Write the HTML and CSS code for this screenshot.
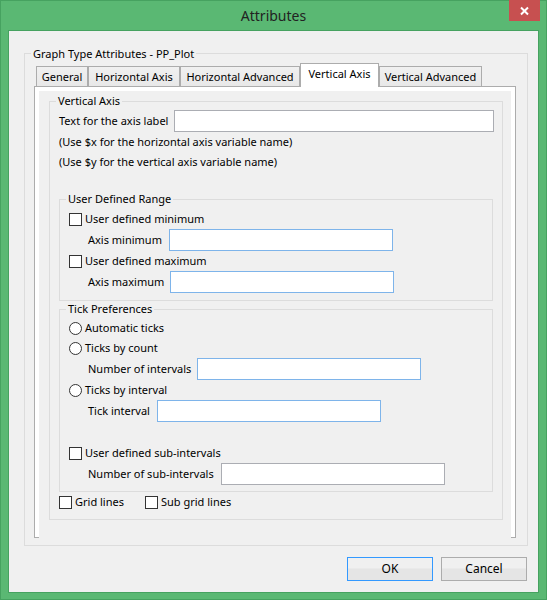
FILE: index.html
```html
<!DOCTYPE html>
<html>
<head>
<meta charset="utf-8">
<title>Attributes</title>
<link rel="stylesheet" href="styles.css">
</head>
<body>
<div class="window">
  <div class="titlebar">
    <span class="spacer"></span>
    <span class="title">Attributes</span>
    <button class="close" type="button" aria-label="Close">
      <svg width="31" height="21" viewBox="0 0 31 21"><path d="M12 7.5 L19 14.5 M19 7.5 L12 14.5" stroke="#fff" stroke-width="2" fill="none"/></svg>
    </button>
  </div>
  <div class="client">
    <div class="group outer">
      <div class="legend">Graph Type Attributes - PP_Plot</div>
      <div class="tabs">
        <div class="tab t-general">General</div>
        <div class="tab t-haxis">Horizontal Axis</div>
        <div class="tab t-hadv">Horizontal Advanced</div>
        <div class="tab active t-vaxis">Vertical Axis</div>
        <div class="tab t-vadv">Vertical Advanced</div>
      </div>
      <div class="panel">
        <div class="page">
          <div class="group axis">
            <div class="legend">Vertical Axis</div>
            <div class="field top">
              <label class="lbl lbl-label">Text for the axis label</label>
              <input class="text wide" type="text">
            </div>
            <div class="note">(Use $x for the horizontal axis variable name)</div>
            <div class="note">(Use $y for the vertical axis variable name)</div>

            <div class="group sub range">
              <div class="legend">User Defined Range</div>
              <label class="check first-range"><input type="checkbox"><span>User defined minimum</span></label>
              <div class="field indent">
                <span class="lbl lbl-min">Axis minimum</span>
                <input class="text hover" type="text">
              </div>
              <label class="check"><input type="checkbox"><span>User defined maximum</span></label>
              <div class="field indent">
                <span class="lbl lbl-max">Axis maximum</span>
                <input class="text hover" type="text">
              </div>
            </div>

            <div class="group sub ticks">
              <div class="legend">Tick Preferences</div>
              <label class="check first-tick"><input type="radio" name="tick"><span>Automatic ticks</span></label>
              <label class="check"><input type="radio" name="tick"><span>Ticks by count</span></label>
              <div class="field indent">
                <span class="lbl lbl-count">Number of intervals</span>
                <input class="text hover" type="text">
              </div>
              <label class="check"><input type="radio" name="tick"><span>Ticks by interval</span></label>
              <div class="field indent">
                <span class="lbl lbl-tick">Tick interval</span>
                <input class="text hover" type="text">
              </div>
              <label class="check spaced"><input type="checkbox"><span>User defined sub-intervals</span></label>
              <div class="field indent">
                <span class="lbl lbl-sub">Number of sub-intervals</span>
                <input class="text" type="text">
              </div>
            </div>

            <div class="grid-row">
              <label class="check plain grid-item"><input type="checkbox"><span>Grid lines</span></label>
              <label class="check plain"><input type="checkbox"><span>Sub grid lines</span></label>
            </div>
          </div>
        </div>
      </div>
    </div>
    <div class="buttons">
      <button class="btn default" type="button">OK</button>
      <button class="btn" type="button">Cancel</button>
    </div>
  </div>
</div>
</body>
</html>
```
FILE: styles.css
```css
* { box-sizing: border-box; }

body {
  margin: 0;
  font-family: "Noto Sans", "Open Sans", sans-serif;
  font-size: 11px;
  line-height: 16px;
  color: #000;
  background: #ffffff;
}

.window {
  width: 547px;
  height: 600px;
  background: #5ab873;
  border: 1px solid #46a260;
  display: flex;
  flex-direction: column;
}

.titlebar {
  height: 29px;
  display: grid;
  grid-template-columns: 1fr auto 1fr;
  align-items: start;
}

.title {
  font-size: 14px;
  line-height: 30px;
  color: #222;
}

.close {
  justify-self: end;
  width: 31px;
  height: 21px;
  margin: -1px 6px 0 0;
  padding: 0;
  border: 0;
  background: #c75050;
  display: flex;
}

.client {
  flex: 1;
  margin: 0 7px 7px;
  border: 1px solid #46a260;
  background: #f0f0f0;
  display: flex;
  flex-direction: column;
}

.group {
  border: 1px solid #dcdcdc;
}

.legend {
  width: fit-content;
  margin: -9px 0 0 6px;
  padding: 0 2px;
  line-height: 16px;
  background: #f0f0f0;
  white-space: nowrap;
}

.outer {
  margin: 22px 10px 0 15px;
}

.outer > .legend {
  padding-top: 1px;
  margin-bottom: -1px;
}

.tabs {
  display: flex;
  align-items: flex-end;
  height: 24px;
  margin: 2px 0 -1px 11px;
}

.tab {
  height: 20px;
  margin-bottom: 1px;
  border: 1px solid #acacac;
  border-bottom: 0;
  background: linear-gradient(#f0f0f0, #e8e8e8);
  display: flex;
  align-items: center;
  justify-content: center;
  white-space: nowrap;
}

.tab.active {
  height: 24px;
  margin-bottom: 0;
  padding-bottom: 3px;
  background: #ffffff;
  position: relative;
  z-index: 1;
}

.t-general { width: 52px; }
.t-haxis { width: 92px; }
.t-hadv { width: 120px; }
.t-vaxis { width: 79px; }
.t-vadv { width: 103px; }

.panel {
  margin: 0 11px 7px 9px;
  border: 1px solid #acacac;
  background: #ffffff;
  padding: 4px 4px 0;
}

.page {
  background: #f0f0f0;
  margin-bottom: -1px;
  padding: 10px 8px 18px 10px;
}

.field {
  display: flex;
  align-items: center;
  height: 22px;
}

.field.top {
  margin: 1px 8px 0 9px;
}

.field.indent {
  padding-left: 28px;
}

.lbl {
  white-space: nowrap;
  flex: none;
}

.lbl-label { width: 115px; }
.lbl-min { width: 81px; }
.lbl-max { width: 82px; }
.lbl-count { width: 109px; }
.lbl-tick { width: 69px; }
.lbl-sub { width: 133px; }

.text {
  width: 224px;
  height: 22px;
  margin: 0;
  padding: 0 3px;
  border: 1px solid #abadb3;
  background: #ffffff;
  font: inherit;
  outline: none;
}

.text.wide {
  flex: 1;
  width: auto;
}

.text.hover {
  border-color: #7eb4ea;
}

.note {
  line-height: 20px;
  padding-left: 9px;
  white-space: nowrap;
}

.sub {
  margin: 0 9px;
}

.range {
  margin-top: 27px;
  padding-bottom: 7px;
}

.ticks {
  margin-top: 8px;
  padding-bottom: 6px;
}

.check {
  display: flex;
  align-items: center;
  height: 20px;
  padding-left: 9px;
  white-space: nowrap;
}

.check.first-range { margin-top: 2px; }
.check.first-tick { margin-top: 1px; }
.check.spaced { margin-top: 21px; }

.check input {
  appearance: none;
  -webkit-appearance: none;
  width: 13px;
  height: 13px;
  margin: 0 3px 0 0;
  border: 1px solid #333333;
  background: #ffffff;
  flex: none;
}

.check input[type="radio"] {
  border-radius: 50%;
}

.check.plain {
  padding-left: 0;
}

.grid-row {
  display: flex;
  height: 20px;
  padding-left: 9px;
  margin-bottom: 7px;
}

.grid-item {
  width: 86px;
}

.buttons {
  display: flex;
  justify-content: flex-end;
  gap: 8px;
  margin: 11px 11px 11px 0;
}

.btn {
  width: 86px;
  height: 24px;
  margin: 0;
  padding: 0;
  border: 1px solid #acacac;
  background: linear-gradient(#f0f0f0 0%, #f0f0f0 45%, #e5e5e5 50%, #e5e5e5 100%);
  font: inherit;
  font-size: 12px;
  color: #000;
}

.btn.default {
  border-color: #3399ff;
}
```
